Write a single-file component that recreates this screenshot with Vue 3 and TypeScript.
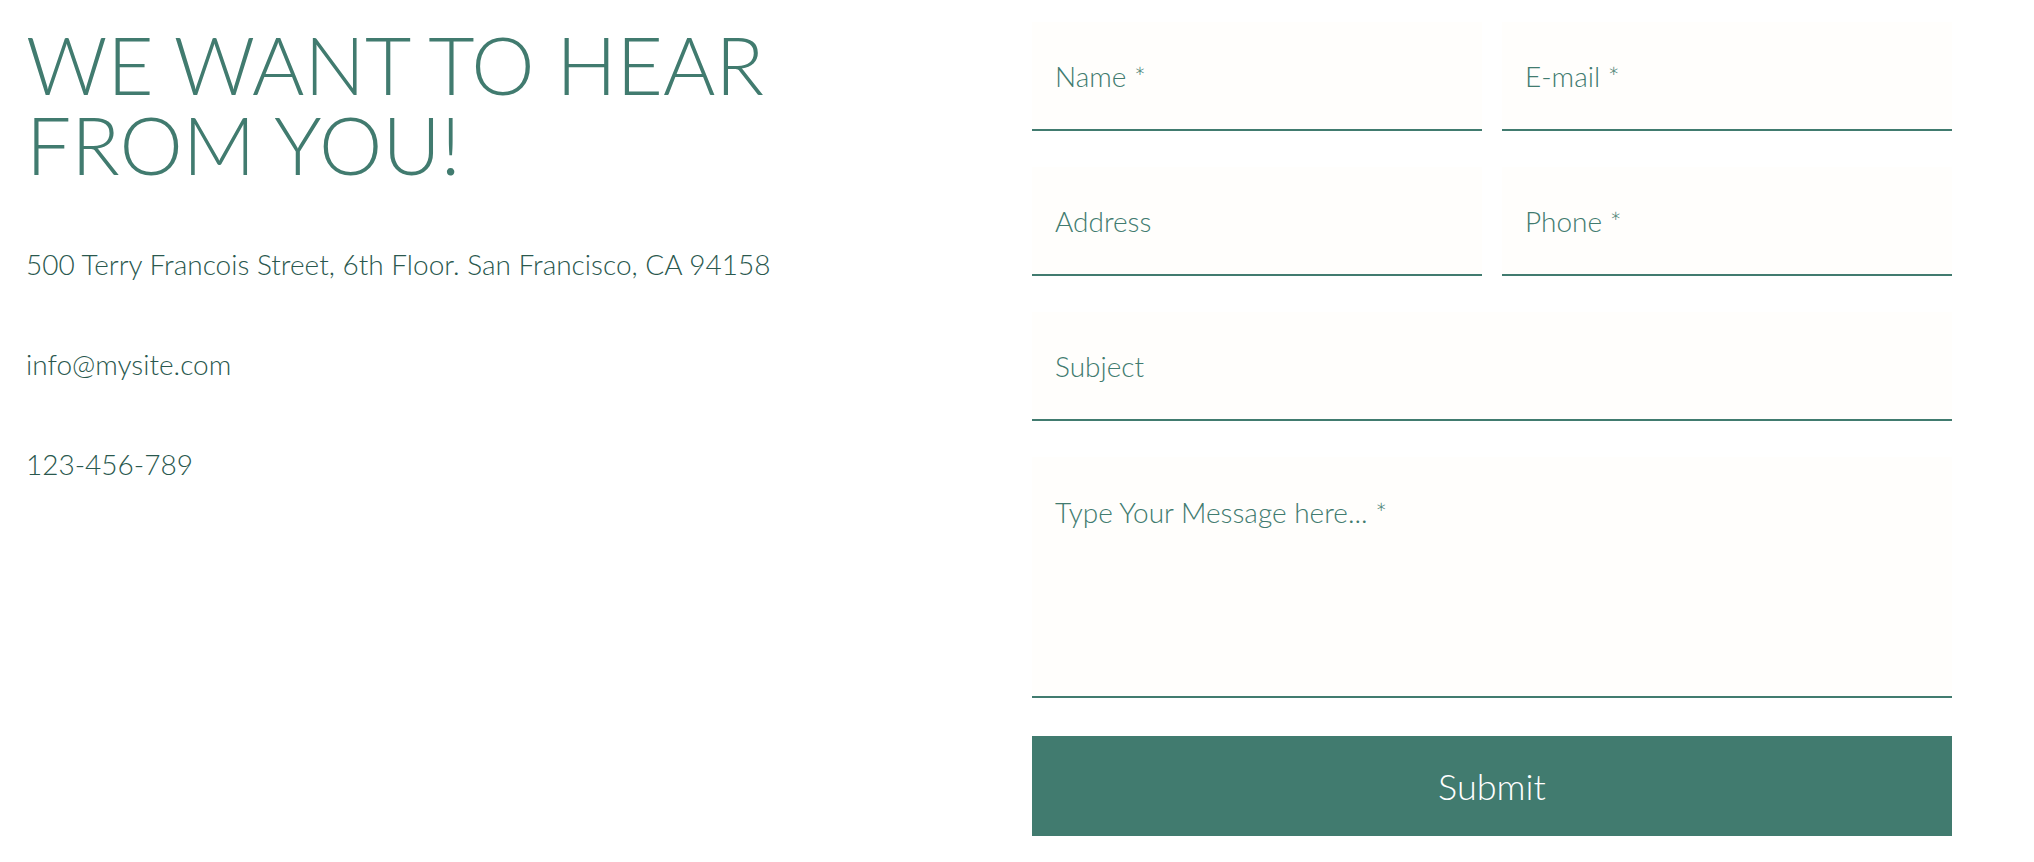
<script setup lang="ts">
interface Field {
  id: string
  label: string
  type: string
  wide?: boolean
}

const fields: Field[] = [
  { id: 'name', label: 'Name *', type: 'text' },
  { id: 'email', label: 'E-mail *', type: 'email' },
  { id: 'address', label: 'Address', type: 'text' },
  { id: 'phone', label: 'Phone *', type: 'tel' },
  { id: 'subject', label: 'Subject', type: 'text', wide: true },
]
</script>

<template>
  <main class="contact">
    <section class="info">
      <h1>We want to hear from you!</h1>
      <p>500 Terry Francois Street, 6th Floor. San Francisco, CA 94158</p>
      <p><a href="mailto:info@mysite.com">info@mysite.com</a></p>
      <p><a href="tel:123456789">123-456-789</a></p>
    </section>
    <form class="form" @submit.prevent>
      <input
        v-for="field in fields"
        :id="field.id"
        :key="field.id"
        class="field"
        :class="{ wide: field.wide }"
        :type="field.type"
        :name="field.id"
        :placeholder="field.label"
        :aria-label="field.label"
      />
      <textarea
        id="message"
        class="field wide message"
        name="message"
        placeholder="Type Your Message here... *"
        aria-label="Type Your Message here... *"
      ></textarea>
      <button class="submit wide" type="submit">Submit</button>
    </form>
  </main>
</template>

<style>
body {
  background: #ffffff;
}
</style>

<style scoped>
.contact {
  display: grid;
  grid-template-columns: 1fr 1fr;
  column-gap: 86px;
  padding: 22px 82px 0 26px;
  font-family: Lato, "Open Sans", sans-serif;
  font-weight: 300;
}
h1 {
  margin: 2px 0 55px;
  font-size: 80px;
  line-height: 80px;
  font-weight: 300;
  text-transform: uppercase;
  color: #417b6f;
}
p {
  margin: 0 0 50px;
  font-size: 28px;
  line-height: 50px;
  color: #2a584e;
}
a {
  color: inherit;
  text-decoration: none;
}
.form {
  display: grid;
  grid-template-columns: 1fr 1fr;
  column-gap: 20px;
  row-gap: 36px;
}
.wide {
  grid-column: 1 / -1;
}
.field {
  box-sizing: border-box;
  width: 100%;
  height: 109px;
  margin: 0;
  padding: 0 23px;
  border: 0;
  border-bottom: 2px solid #417b6f;
  border-radius: 0;
  background: #fffefc;
  font: inherit;
  font-size: 28px;
  line-height: 36px;
  color: #417b6f;
}
.field::placeholder {
  color: #417b6f;
  opacity: 1;
}
.message {
  display: block;
  height: 241px;
  padding-top: 37px;
  resize: none;
}
.submit {
  height: 100px;
  margin: 2px 0 0;
  padding: 0;
  border: 0;
  background: #417b6f;
  font: inherit;
  font-size: 36px;
  color: #ffffff;
}
</style>
